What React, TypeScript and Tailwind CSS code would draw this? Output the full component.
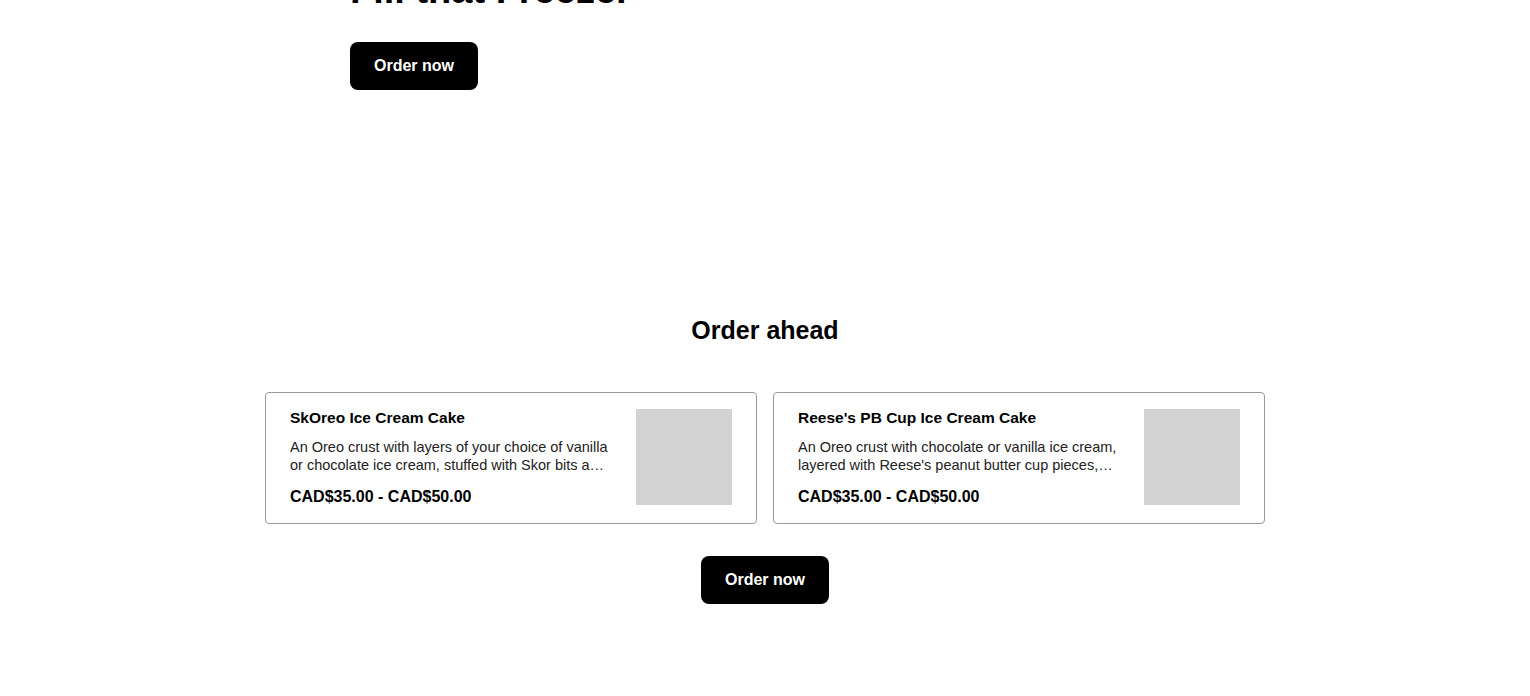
const products = [
  {
    id: "skoreo",
    name: "SkOreo Ice Cream Cake",
    description:
      "An Oreo crust with layers of your choice of vanilla or chocolate ice cream, stuffed with Skor bits and Oreo cookie pieces, finished with fudge.",
    price: "CAD$35.00 - CAD$50.00",
  },
  {
    id: "reeses",
    name: "Reese's PB Cup Ice Cream Cake",
    description:
      "An Oreo crust with chocolate or vanilla ice cream, layered with Reese's peanut butter cup pieces, fudge and a whipped topping.",
    price: "CAD$35.00 - CAD$50.00",
  },
];

function OrderButton() {
  return (
    <button className="h-12 rounded-lg bg-black px-6 text-base font-semibold text-white">
      Order now
    </button>
  );
}

export default function App() {
  return (
    <main
      className="min-h-screen bg-white text-black"
      style={{ fontFamily: '"Liberation Sans", Arial, sans-serif' }}
    >
      <section className="mx-auto w-[830px]">
        <h1 className="-mt-[32px] text-[38px] leading-[44px] font-bold">
          Fill that Freezer
        </h1>
        <div className="mt-[30px]">
          <OrderButton />
        </div>
      </section>

      <section className="mx-auto mt-[224px] flex w-[1000px] flex-col items-center">
        <h2 className="text-[25px] leading-8 font-semibold">Order ahead</h2>

        <div className="mt-[46px] grid w-full grid-cols-2 gap-4">
          {products.map((p) => (
            <div
              key={p.id}
              className="flex gap-6 rounded border border-[#9a9a9a] px-6 py-4"
            >
              <div className="min-w-0 flex-1">
                <h3 className="text-[15.5px] leading-[18px] font-semibold">{p.name}</h3>
                <p className="mt-[11px] line-clamp-2 text-[14.5px] leading-[18px] text-[#222]">
                  {p.description}
                </p>
                <p className="mt-[13px] text-base leading-5 font-semibold">{p.price}</p>
              </div>
              <div className="h-24 w-24 shrink-0 bg-[#d3d3d3]" />
            </div>
          ))}
        </div>

        <div className="mt-8">
          <OrderButton />
        </div>
      </section>
    </main>
  );
}
